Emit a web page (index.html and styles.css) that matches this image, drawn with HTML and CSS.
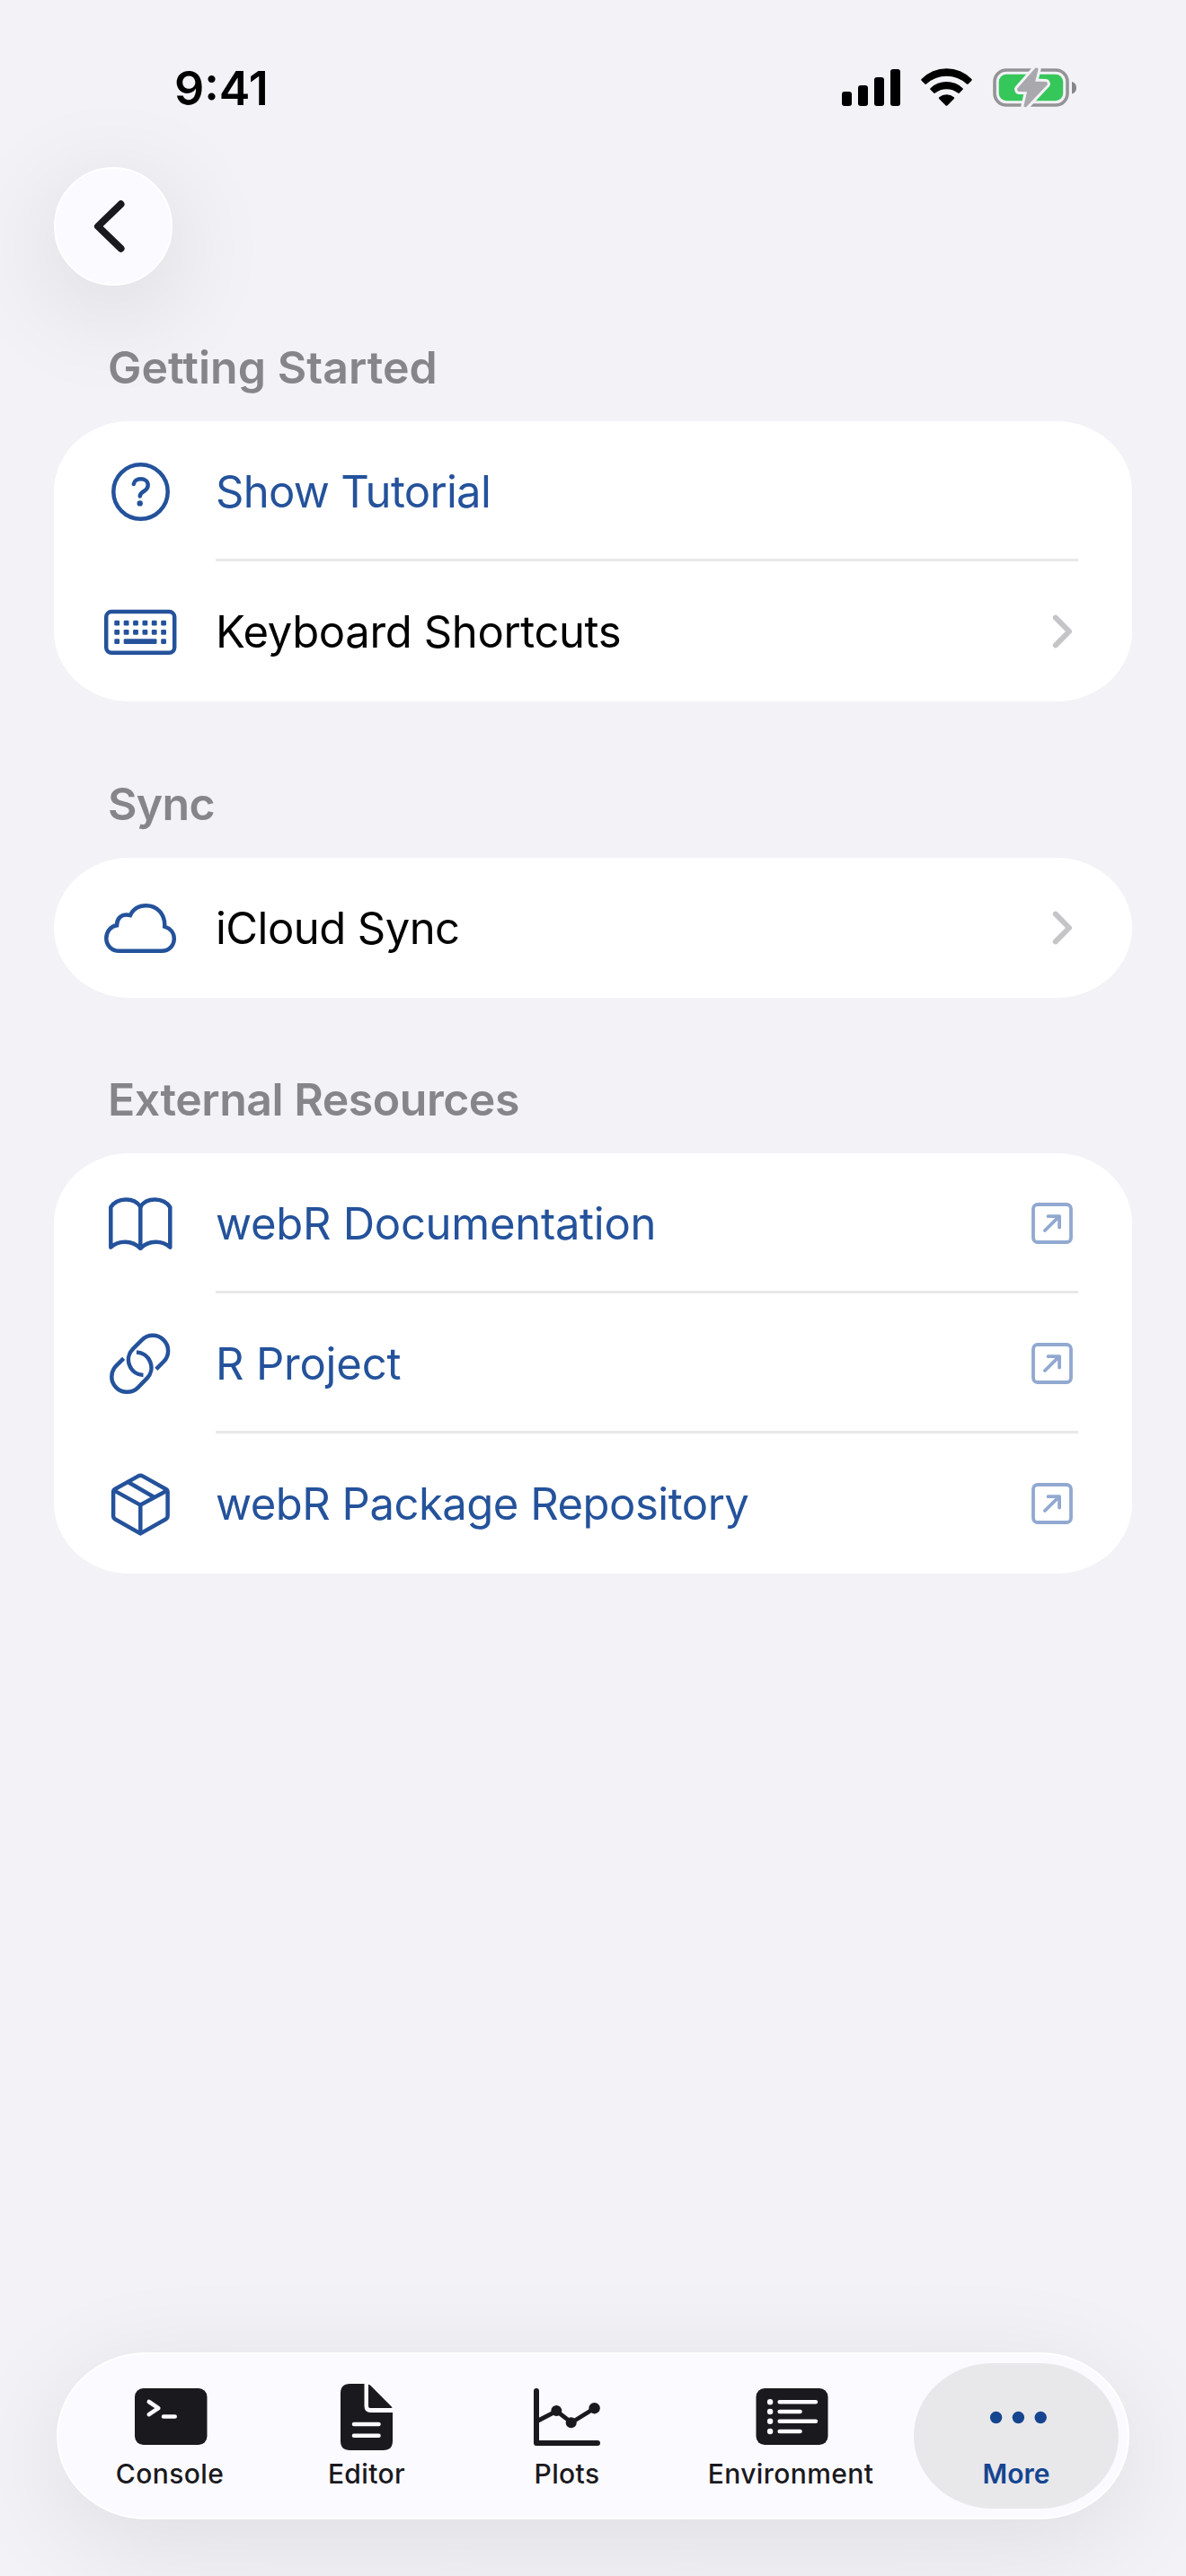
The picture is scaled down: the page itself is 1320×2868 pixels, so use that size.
FILE: index.html
```html
<!DOCTYPE html>
<html lang="en">
<head>
    <meta charset="UTF-8">
    <meta name="viewport" content="width=device-width, initial-scale=1.0">
    <title>More</title>
    <link rel="stylesheet" href="styles.css">
</head>
<body>
<header>
    <div class="status-bar">
        <span class="time">9:41</span>
        <div class="status-icons">
            <svg class="signal" width="65" height="41" viewBox="0 0 65 41">
                <rect x="0" y="25" width="11" height="16" rx="3"/>
                <rect x="18" y="18" width="11" height="23" rx="3"/>
                <rect x="36" y="9" width="11" height="32" rx="3"/>
                <rect x="54" y="0" width="11" height="41" rx="3"/>
            </svg>
            <svg class="wifi" width="57" height="42" viewBox="0 0 57 42">
                <path d="M0.6 12 A39 39 0 0 1 56.4 12 Q57.3 12.8 56.4 13.7 L52.6 17.5 Q51.8 18.2 50.9 17.4 A33.6 33.6 0 0 0 6.1 17.4 Q5.2 18.2 4.4 17.5 L0.6 13.7 Q-0.3 12.8 0.6 12 Z"/>
                <path d="M10.5 22.2 A26 26 0 0 1 46.5 22.2 Q47.3 23 46.5 23.8 L42.8 27.6 Q42 28.4 41.1 27.6 A20 20 0 0 0 15.9 27.6 Q15 28.4 14.2 27.6 L10.5 23.8 Q9.7 23 10.5 22.2 Z"/>
                <path d="M20.2 32.2 A13 13 0 0 1 36.8 32.2 Q37.6 33 36.8 33.9 L29.4 41.4 Q28.5 42.3 27.6 41.4 L20.2 33.9 Q19.4 33 20.2 32.2 Z"/>
            </svg>
            <svg class="battery" width="93" height="43" viewBox="0 0 93 43">
                <rect class="battery-case" x="2" y="2" width="81" height="39" rx="13"/>
                <rect class="battery-fill" x="6.7" y="6.8" width="71.5" height="29.4" rx="8.5"/>
                <path class="battery-nub" d="M88 15 C91.5 16 93 18.5 93 21.7 C93 25 91.5 27.5 88 28.5 Z"/>
                <path class="bolt-edge" d="M48 0.5 L49.6 0.8 L46 15.5 L59.3 15.9 L60 17.6 L36.6 42.4 L35.4 41.9 L39.3 25.2 L28.6 25 L28 23.2 Z"/>
                <path class="bolt" d="M48 0.5 L49.6 0.8 L46 15.5 L59.3 15.9 L60 17.6 L36.6 42.4 L35.4 41.9 L39.3 25.2 L28.6 25 L28 23.2 Z"/>
            </svg>
        </div>
    </div>
    <button class="back" aria-label="Back">
        <svg width="40" height="64" viewBox="0 0 40 64">
            <path d="M32.5 7.3 L7 32 L32.5 56.7"/>
        </svg>
    </button>
</header>

<main>
    <section>
        <h2 class="started">Getting Started</h2>
        <div class="card">
            <a class="row link">
                <svg class="icon" width="84" height="78" viewBox="0 0 84 78">
                    <circle cx="42.5" cy="39.5" r="30.2"/>
                    <path d="M34.8 31 C35.3 27.4 38.4 25.3 42.6 25.3 C47.3 25.3 50.7 28 50.7 32 C50.7 35.3 49.2 37 46 39 C43 40.9 41.8 42.4 41.8 44.4"/>
                    <circle class="solid" cx="41.7" cy="52.4" r="3.2"/>
                </svg>
                <span class="row-body"><span class="tutorial">Show Tutorial</span></span>
            </a>
            <a class="row">
                <svg class="icon" width="84" height="78" viewBox="0 0 84 78">
                    <rect x="4.2" y="17" width="76" height="45.8" rx="6"/>
                    <g class="solid">
                        <rect x="13.3" y="26.7" width="5.8" height="5.8" rx="1.3"/>
                        <rect x="23.7" y="26.7" width="5.8" height="5.8" rx="1.3"/>
                        <rect x="34.1" y="26.7" width="5.8" height="5.8" rx="1.3"/>
                        <rect x="44.5" y="26.7" width="5.8" height="5.8" rx="1.3"/>
                        <rect x="54.8" y="26.7" width="5.8" height="5.8" rx="1.3"/>
                        <rect x="65.2" y="26.7" width="5.8" height="5.8" rx="1.3"/>
                        <rect x="13.3" y="37" width="5.8" height="5.8" rx="1.3"/>
                        <rect x="23.7" y="37" width="5.8" height="5.8" rx="1.3"/>
                        <rect x="34.1" y="37" width="5.8" height="5.8" rx="1.3"/>
                        <rect x="44.5" y="37" width="5.8" height="5.8" rx="1.3"/>
                        <rect x="54.8" y="37" width="5.8" height="5.8" rx="1.3"/>
                        <rect x="65.2" y="37" width="5.8" height="5.8" rx="1.3"/>
                        <rect x="13.3" y="47.3" width="5.8" height="5.8" rx="1.3"/>
                        <rect x="23.7" y="47.3" width="36.8" height="5.8" rx="1.3"/>
                        <rect x="65.2" y="47.3" width="5.8" height="5.8" rx="1.3"/>
                    </g>
                </svg>
                <span class="row-body"><span class="shortcuts">Keyboard Shortcuts</span>
                    <svg class="chevron" width="24" height="40" viewBox="0 0 24 40"><path d="M3.8 4.7 L19 20 L3.8 35.3"/></svg>
                </span>
            </a>
        </div>
    </section>

    <section>
        <h2>Sync</h2>
        <div class="card">
            <a class="row">
                <svg class="icon" width="84" height="78" viewBox="0 0 84 78">
                    <path class="miter" d="M19 64.8 C10.5 64.8 4.3 58.8 4.3 50.8 C4.3 43 9.5 37 16 36.3 C16 29 20.5 24.4 26.5 24.4 C28 24.4 29.5 24.5 31 25 C34.2 18.3 40.5 14.3 48.5 14.3 C61 14.3 70 24 69.2 37.6 C75.5 39.5 79.8 44.5 79.8 51 C79.8 59 73.8 64.8 66 64.8 Z"/>
                </svg>
                <span class="row-body"><span class="icloud">iCloud Sync</span>
                    <svg class="chevron" width="24" height="40" viewBox="0 0 24 40"><path d="M3.8 4.7 L19 20 L3.8 35.3"/></svg>
                </span>
            </a>
        </div>
    </section>

    <section class="resources">
        <h2 class="external-title">External Resources</h2>
        <div class="card">
            <a class="row link">
                <svg class="icon" width="84" height="78" viewBox="0 0 84 78">
                    <path d="M42.3 20.5 C35.6 9.7 16.5 9.7 9.3 21 V65.7 C18 57.5 33 57.5 42.3 66.8 C51.6 57.5 66.6 57.5 75.3 65.7 V21 C68.1 9.7 49 9.7 42.3 20.5 Z"/>
                    <path d="M42.3 20.5 V66.5"/>
                </svg>
                <span class="row-body"><span class="docs">webR Documentation</span>
                    <svg class="external" width="46" height="46" viewBox="0 0 46 46"><rect x="2" y="2" width="42" height="42" rx="5"/><path d="M14.9 31 L31 15.2 M18.6 15.2 H31.1 V27.6"/></svg>
                </span>
            </a>
            <a class="row link">
                <svg class="icon" width="84" height="78" viewBox="0 0 84 78">
                    <path class="butt" d="M59.8 45.3 L68.1 37 A17.1 17.1 0 0 0 43.9 12.8 L33.9 22.9 A17.1 17.1 0 0 0 45.5 52"/>
                    <path class="butt" transform="rotate(180 41.7 39.3)" d="M59.8 45.3 L68.1 37 A17.1 17.1 0 0 0 43.9 12.8 L33.9 22.9 A17.1 17.1 0 0 0 45.5 52"/>
                </svg>
                <span class="row-body"><span class="project">R Project</span>
                    <svg class="external" width="46" height="46" viewBox="0 0 46 46"><rect x="2" y="2" width="42" height="42" rx="5"/><path d="M14.9 31 L31 15.2 M18.6 15.2 H31.1 V27.6"/></svg>
                </span>
            </a>
            <a class="row link">
                <svg class="icon" width="84" height="78" viewBox="0 0 84 78">
                    <path d="M39.5 8.6 Q42.3 7 45.1 8.6 L70.3 22.8 Q72.6 24.1 72.6 26.6 V52.6 Q72.6 55.2 70.3 56.5 L42.3 72.4 L14.3 56.5 Q12.1 55.2 12.1 52.6 V26.6 Q12.1 24.1 14.3 22.8 Z"/>
                    <path d="M12.8 24.4 L42.3 40.6 L72 24.4 M42.3 40.6 V72 M28.5 15 L57.3 31.7"/>
                </svg>
                <span class="row-body"><span class="packages">webR Package Repository</span>
                    <svg class="external" width="46" height="46" viewBox="0 0 46 46"><rect x="2" y="2" width="42" height="42" rx="5"/><path d="M14.9 31 L31 15.2 M18.6 15.2 H31.1 V27.6"/></svg>
                </span>
            </a>
        </div>
    </section>
</main>

<nav class="tab-bar">
    <a class="tab">
        <svg width="80" height="80" viewBox="-1 0 80 80">
            <rect x="0" y="9" width="80.5" height="63" rx="9.5"/>
            <path class="cut" d="M15.8 24 L26.3 31.2 L15.8 38.2 M32 40.5 H44.7"/>
        </svg>
        <span>Console</span>
    </a>
    <a class="tab">
        <svg width="58" height="80" viewBox="0 0 58 80">
            <path d="M10.5 4 H26.5 V29 Q26.5 36 33.5 36 H58 V67.5 Q58 78 47.5 78 H10.5 Q0 78 0 67.5 V14.5 Q0 4 10.5 4 Z"/>
            <path d="M31 4.8 Q32.5 5 34 6.5 L55.6 28.2 Q57.3 30 57.5 31 H33 Q31 31 31 29 Z"/>
            <path class="cut" d="M15 49 H42.5 M15 61.7 H42.5"/>
        </svg>
        <span>Editor</span>
    </a>
    <a class="tab">
        <svg width="74" height="80" viewBox="0 0 74 80">
            <path class="axis" d="M3 12 V70 H71"/>
            <path class="plot" d="M3 46 L25.5 34.3 L42 47.2 L67.7 31.3"/>
            <circle cx="25.3" cy="34" r="6"/>
            <circle cx="41.7" cy="47.2" r="6"/>
            <circle cx="67.6" cy="31.2" r="6.2"/>
        </svg>
        <span>Plots</span>
    </a>
    <a class="tab">
        <svg width="80" height="80" viewBox="-1.5 0 80 80">
            <rect x="0" y="9" width="80" height="63" rx="9.5"/>
            <path class="cut" d="M26.2 24.2 H66.4 M26.2 35 H49 M26.2 45.8 H66.4 M26.2 57 H49"/>
            <g class="dots">
                <circle cx="15.6" cy="24.2" r="3.2"/>
                <circle cx="15.6" cy="35" r="3.2"/>
                <circle cx="15.6" cy="45.8" r="3.2"/>
                <circle cx="15.6" cy="57" r="3.2"/>
            </g>
        </svg>
        <span>Environment</span>
    </a>
    <a class="tab active">
        <svg width="64" height="80" viewBox="-1 0 64 80">
            <circle cx="8.6" cy="41.5" r="6.7"/>
            <circle cx="33.4" cy="41.5" r="6.7"/>
            <circle cx="58.2" cy="41.5" r="6.7"/>
        </svg>
        <span>More</span>
    </a>
</nav>
</body>
</html>
```
FILE: styles.css
```css
body {
    margin: 0;
    height: 2868px;
    display: flex;
    flex-direction: column;
    background-color: #f2f2f7;
    font-family: Inter, "Liberation Sans", sans-serif;
    color: #000;
}

svg {
    display: block;
    flex: none;
    overflow: visible;
}

.status-bar {
    box-sizing: border-box;
    height: 186px;
    padding: 8px 122px 0 194px;
    display: flex;
    align-items: center;
    justify-content: space-between;
}

.time {
    font-size: 52px;
    font-weight: 600;
    letter-spacing: 0;
    padding-top: 2px;
}

.status-icons {
    display: flex;
    align-items: center;
    gap: 23px;
}

.battery-case {
    fill: none;
    stroke: #949497;
    stroke-width: 3.6;
}

.battery-fill {
    fill: #35c759;
}

.battery-nub {
    fill: #868689;
}

.bolt-edge {
    fill: #f2f2f7;
    stroke: #f2f2f7;
    stroke-width: 8;
    stroke-linejoin: round;
}

.bolt {
    fill: #a8a8ad;
    stroke: #a8a8ad;
    stroke-width: 2;
    stroke-linejoin: round;
}

.back {
    box-sizing: border-box;
    width: 132px;
    height: 132px;
    margin-left: 60px;
    padding: 0 8px 0 0;
    display: flex;
    align-items: center;
    justify-content: center;
    border: 2px solid #fff;
    border-radius: 50%;
    background-color: #fbfaff;
    box-shadow: 0 24px 120px rgba(0, 0, 0, 0.12);
}

.back path {
    fill: none;
    stroke: #1a191e;
    stroke-width: 8;
    stroke-linecap: round;
    stroke-linejoin: round;
}

main {
    padding: 61px 60px 0;
}

section + section {
    margin-top: 84px;
}

section.resources {
    margin-top: 83px;
}

h2 {
    margin: 0 0 30px;
    padding-left: 60px;
    font-size: 50px;
    line-height: 60px;
    font-weight: 600;
    letter-spacing: -0.7px;
    color: #868589;
}

.started {
    letter-spacing: 0.05px;
}

.external-title {
    letter-spacing: -0.48px;
}

.card {
    background-color: #fff;
    border-radius: 84px / 78px;
}

.row {
    height: 156px;
    padding: 0 60px 0 54px;
    display: flex;
    align-items: center;
    gap: 42px;
    font-size: 49px;
}

.link {
    color: #24529b;
}

.row-body {
    box-sizing: border-box;
    flex: 1;
    height: 156px;
    padding: 3px 0 0;
    display: flex;
    align-items: center;
    justify-content: space-between;
    border-bottom: 3px solid #e8e8e8;
}

.row:last-child .row-body {
    border-bottom-color: transparent;
}

.tutorial {
    letter-spacing: -0.7px;
}

.shortcuts {
    letter-spacing: -0.38px;
}

.icloud {
    letter-spacing: -0.55px;
}

.docs {
    letter-spacing: -0.28px;
}

.project {
    letter-spacing: -0.2px;
}

.packages {
    letter-spacing: -0.5px;
}

.icon {
    fill: none;
    stroke: #24529b;
    stroke-width: 4.5;
    stroke-linecap: round;
    stroke-linejoin: round;
}

.icon .solid {
    fill: #24529b;
    stroke: none;
}

.icon .miter {
    stroke-linejoin: miter;
}

.icon .butt {
    stroke-linecap: butt;
}

.chevron {
    margin-right: 5px;
    fill: none;
    stroke: #c5c5c7;
    stroke-width: 6;
    stroke-linecap: round;
    stroke-linejoin: round;
}

.external {
    margin-right: 6px;
    fill: none;
    stroke: #91a9d0;
    stroke-width: 3.8;
    stroke-linecap: round;
    stroke-linejoin: round;
}

.tab-bar {
    box-sizing: border-box;
    width: 1194px;
    height: 186px;
    margin: auto auto 63px;
    padding: 10px;
    display: grid;
    grid-template-columns: 228px 210px 236px 268px 228px;
    border: 2px solid #fff;
    border-radius: 100px / 93px;
    background-color: #fbfaff;
    box-shadow: 0 24px 120px rgba(0, 0, 0, 0.09);
}

.tab {
    padding-top: 19px;
    display: flex;
    flex-direction: column;
    align-items: center;
    font-size: 30px;
    line-height: 36px;
    font-weight: 500;
    letter-spacing: 0.4px;
    color: #1a191e;
    fill: #1a191e;
}

.tab span {
    margin-top: 6px;
}

.tab:nth-child(4) {
    padding-right: 6px;
}

.tab .cut {
    fill: none;
    stroke: #fbfaff;
    stroke-width: 4.6;
    stroke-linecap: round;
    stroke-linejoin: round;
}

.tab .dots {
    fill: #fbfaff;
}

.tab .axis {
    fill: none;
    stroke: #1a191e;
    stroke-width: 6;
    stroke-linecap: round;
    stroke-linejoin: round;
}

.tab .plot {
    fill: none;
    stroke: #1a191e;
    stroke-width: 4.8;
}

.tab.active {
    border-radius: 88px / 81px;
    background-color: #e8e8eb;
    font-weight: 600;
    letter-spacing: 0;
    color: #15458f;
    fill: #15458f;
}
```
